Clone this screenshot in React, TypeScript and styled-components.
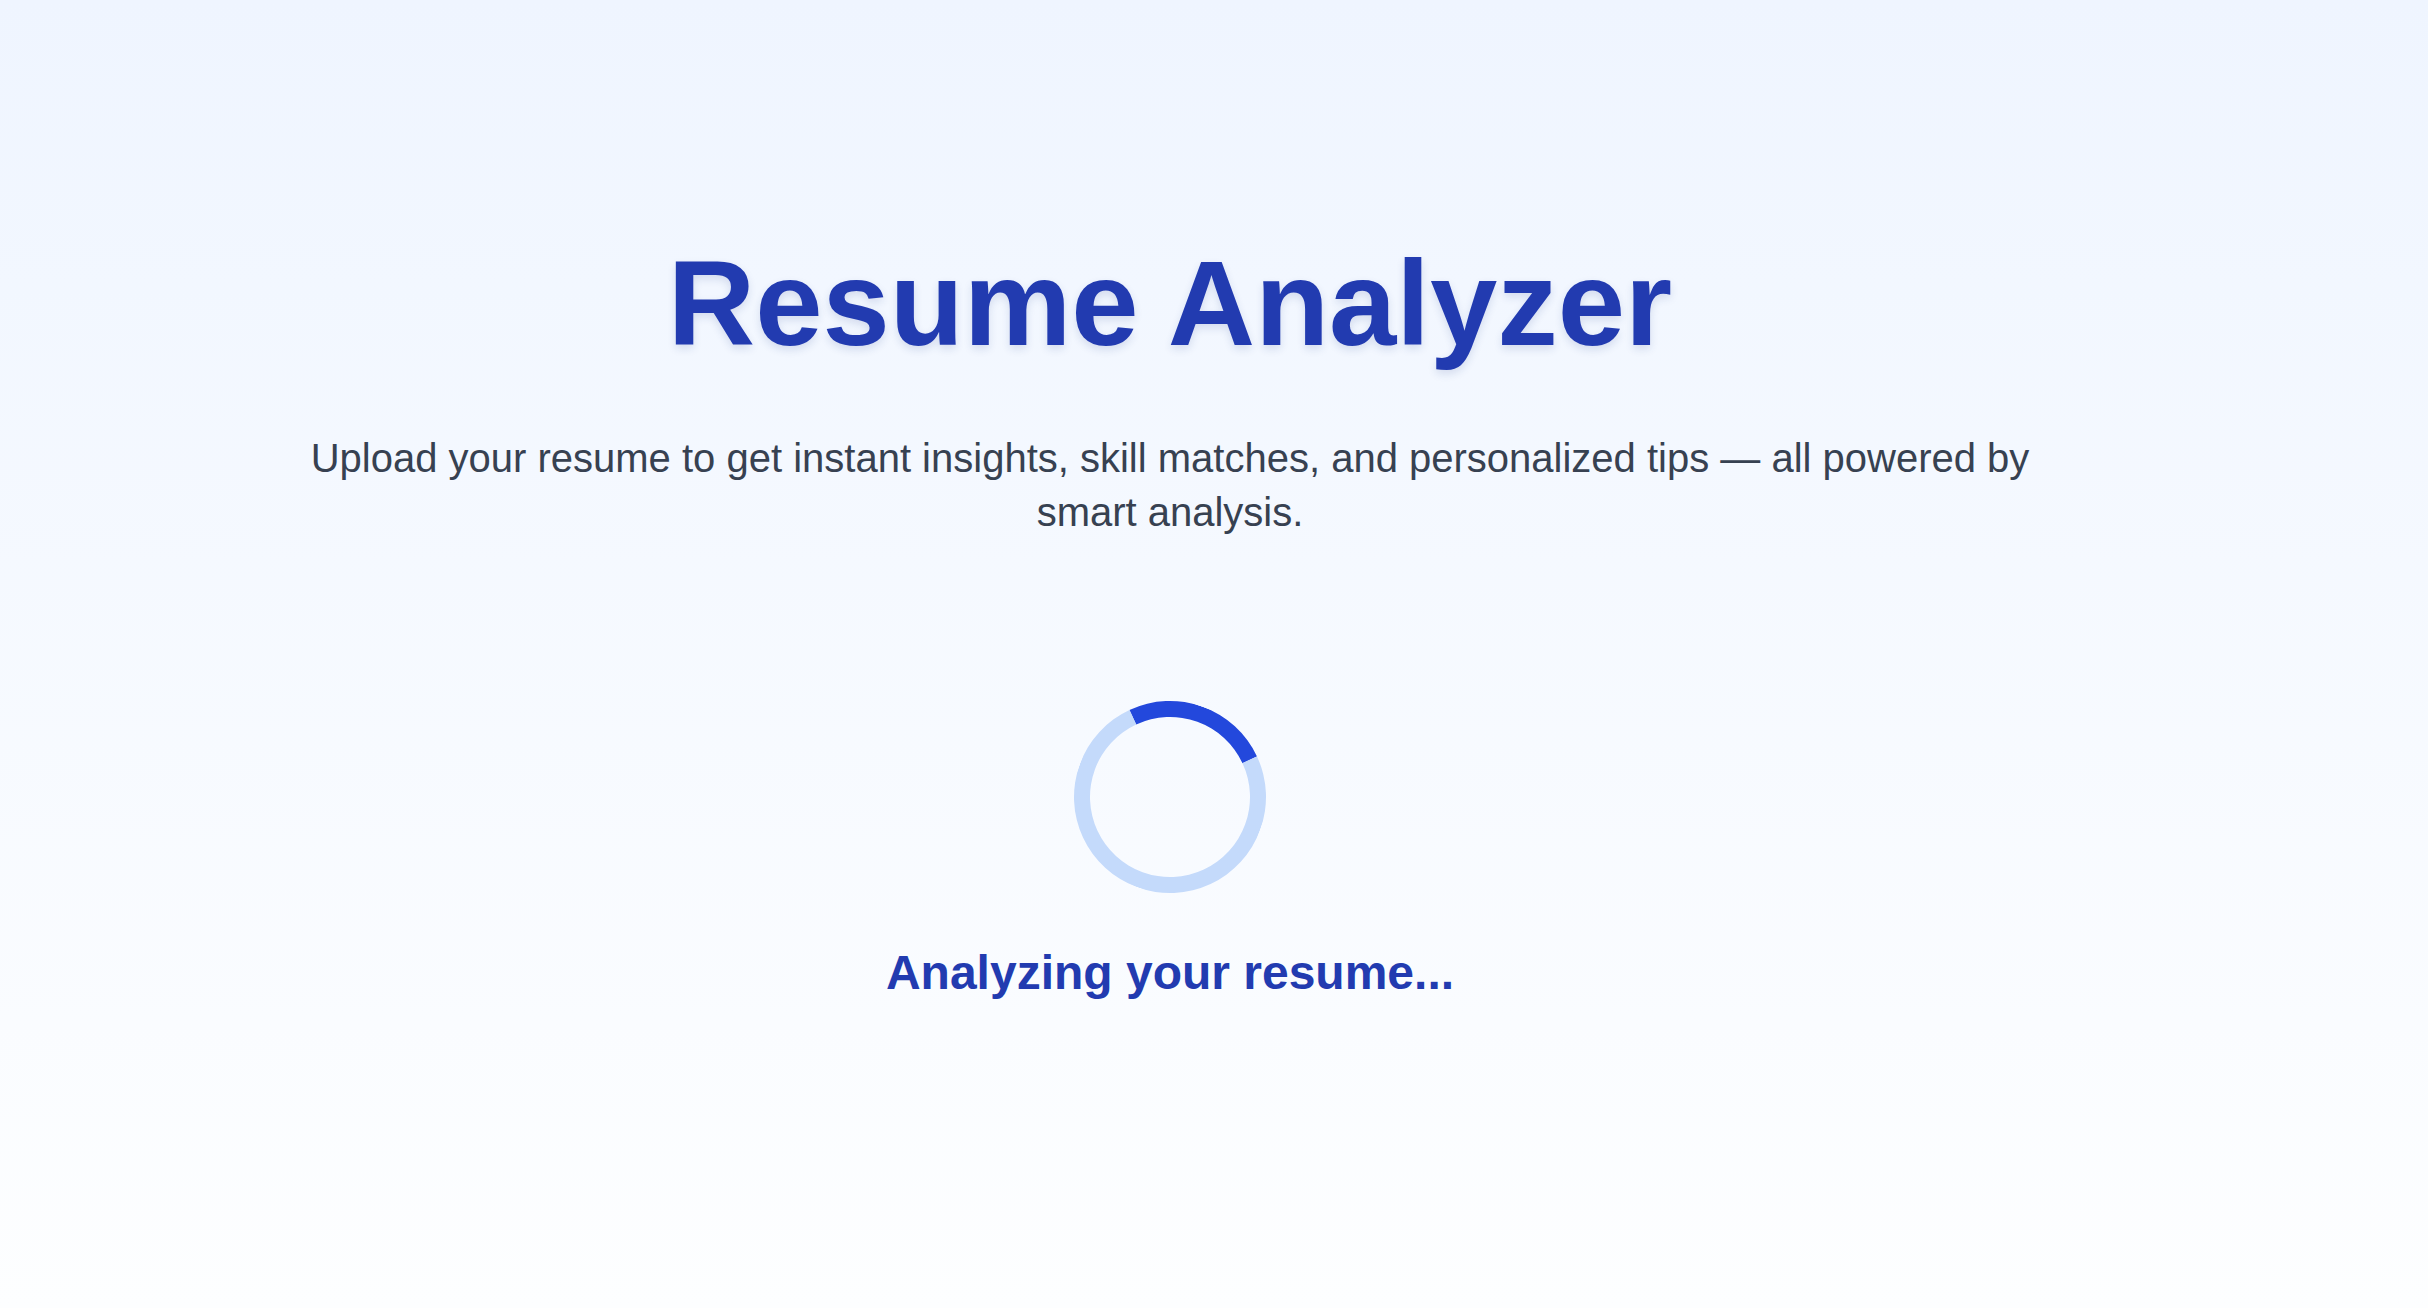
import React from "react";
import styled, { createGlobalStyle } from "styled-components";

const GlobalStyle = createGlobalStyle`
  html, body {
    margin: 0;
    padding: 0;
  }
  body {
    font-family: "Liberation Sans", Arial, sans-serif;
    background: #ffffff;
  }
`;

const Page = styled.main`
  min-height: 1308px;
  box-sizing: border-box;
  background: linear-gradient(to bottom, #eff5ff 0%, #fdfeff 100%);
  padding: 234px 88px 0 0;
  display: flex;
  flex-direction: column;
  align-items: center;
`;

const Title = styled.h1`
  margin: 0;
  font-family: "Liberation Sans", Arial, sans-serif;
  font-size: 121px;
  font-weight: 700;
  line-height: 138px;
  color: #223bb0;
  text-shadow: 0 4px 8px rgba(30, 58, 138, 0.14);
  text-align: center;
`;

const Subtitle = styled.p`
  margin: 59px 0 0;
  max-width: 1760px;
  font-size: 40px;
  line-height: 54px;
  color: #374151;
  text-align: center;
`;

const Spinner = styled.div`
  margin-top: 162px;
  width: 192px;
  height: 192px;
  box-sizing: border-box;
  border-radius: 50%;
  border: 16px solid #c4dafb;
  border-top-color: #2348dc;
  transform: rotate(20deg);
`;

const Status = styled.p`
  margin: 52px 0 0;
  font-size: 48px;
  font-weight: 700;
  line-height: 55px;
  color: #223bb0;
  text-align: center;
`;

export default function App() {
  return (
    <>
      <GlobalStyle />
      <Page>
        <Title>Resume Analyzer</Title>
        <Subtitle>
          Upload your resume to get instant insights, skill matches, and personalized tips — all powered by smart analysis.
        </Subtitle>
        <Spinner />
        <Status>Analyzing your resume...</Status>
      </Page>
    </>
  );
}
